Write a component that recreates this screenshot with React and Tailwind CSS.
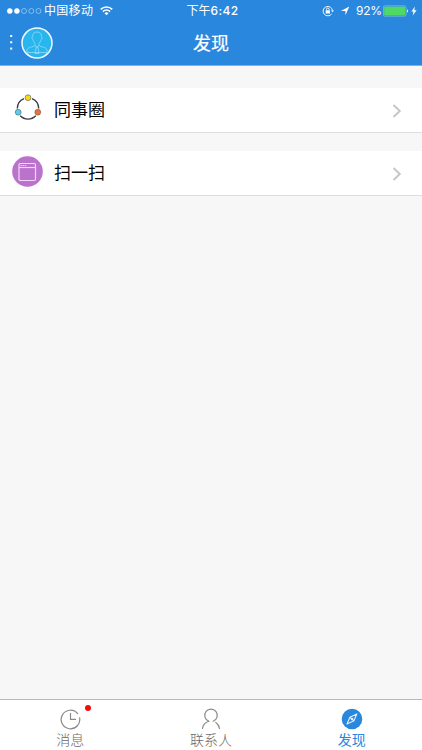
import React, { useState } from 'react';

const AvatarIcon = () => (
  <svg width="32" height="32" viewBox="0 0 32 32" fill="none">
    <circle cx="16" cy="16" r="15" fill="#29b6ee" stroke="#f2faff" strokeWidth="1.5" />
    <g stroke="#8edcfa" strokeWidth="0.8" strokeLinejoin="round">
      <path d="M11.6 9.6C11.3 6.6 13.2 5 16 5s4.800 1.600 4.500 4.600c.8.2.7 2.600-.4 2.900-.4 1.900-1.300 3.200-2.100 3.800v2.200c1.800 1.500 7.500 1.800 8 4.400v2.600H6v-2.600c.5-2.600 6.200-2.900 8-4.400v-2.200c-.8-.6-1.700-1.900-2.100-3.800-1.100-.3-1.200-2.700-.3-2.900z" />
      <path d="M14 18.500l2 1.500 2-1.500M15.200 20h1.600l1.200 6.500h-4l1.200-6.500z" />
    </g>
  </svg>
);

const CircleIcon = () => (
  <svg width="30" height="30" viewBox="0 0 30 30" fill="none">
    <g stroke="#3c3c40" strokeWidth="1.400">
      <path d="M19 4.700A10.800 10.800 0 0 1 25.700 14.600" />
      <path d="M11 4.700A10.800 10.800 0 0 0 4.300 14.600" />
      <path d="M7.200 21.800A10.800 10.800 0 0 0 22.800 21.800" />
    </g>
    <g stroke="#6a6a60" strokeWidth="0.700">
      <circle cx="15" cy="3.700" r="2.900" fill="#f5dc16" />
      <circle cx="5.200" cy="18.200" r="2.900" fill="#4fd0f5" />
      <circle cx="24.800" cy="18.200" r="2.900" fill="#f0702c" />
    </g>
  </svg>
);

const ScanIcon = () => (
  <svg width="31" height="31" viewBox="0 0 31 31" fill="none">
    <circle cx="15.500" cy="15.500" r="15.300" fill="#ba72cc" />
    <g stroke="#efd9f5" strokeWidth="1.200">
      <rect x="7" y="7.500" width="16.500" height="17" rx="1.200" />
      <path d="M7 11.500h16.500" />
      <path d="M8.500 9.500h6" strokeWidth="0.900" strokeDasharray="1.400 0.700" />
    </g>
  </svg>
);

const ClockIcon = () => (
  <svg width="22" height="22" viewBox="0 0 22 22" fill="none" stroke="#8a8a8a" strokeWidth="1.200">
    <path d="M18.800 5.800A9.300 9.300 0 1 0 20.500 9.300" />
    <path d="M11.500 5v6.300h5.500" />
  </svg>
);

const ContactIcon = () => (
  <svg width="22" height="22" viewBox="0 0 22 22" fill="none" stroke="#8a8a8a" strokeWidth="1.200" strokeLinecap="round">
    <path d="M8.800 13.300A6.300 6.300 0 1 1 13.200 13.300" />
    <path d="M8.800 13.300C5 14.500 3 17 2.500 20.500" />
    <path d="M15.800 14.500c2 1.300 3.200 3.300 3.700 6" />
  </svg>
);

const CompassIcon = () => (
  <svg width="22" height="22" viewBox="0 0 22 22" fill="none">
    <circle cx="11" cy="11" r="10.300" fill="#2987dd" />
    <g stroke="#e4f1fc" strokeWidth="1.100" strokeLinejoin="round">
      <path d="M15.900 5.900L12.900 12.800L6 16L8.900 9.200Z" />
      <path d="M8.900 9.200L12.900 12.800" />
      <circle cx="11" cy="11" r="0.800" />
    </g>
  </svg>
);

const Chevron = () => (
  <svg width="10" height="14" viewBox="0 0 10 14" fill="none" stroke="#c5c5ca" strokeWidth="1.900">
    <path d="M1.500 1l6.300 6-6.300 6" />
  </svg>
);

const ROWS = [
  { label: '同事圈', Icon: CircleIcon },
  { label: '扫一扫', Icon: ScanIcon },
];

const TABS = [
  { label: '消息', Icon: ClockIcon, unread: true },
  { label: '联系人', Icon: ContactIcon },
  { label: '发现', Icon: CompassIcon },
];

const StatusBar = () => (
  <div className="grid grid-cols-[1fr_auto_1fr] h-[22px] items-center text-[12px] leading-[22px]">
    <div className="flex items-center pl-[7px]">
      <svg width="35" height="6" viewBox="0 0 35 6" fill="none" stroke="#fff" strokeWidth="0.600">
        <circle cx="2.800" cy="3" r="2.500" fill="#fff" />
        <circle cx="9.900" cy="3" r="2.500" fill="#fff" />
        <circle cx="17" cy="3" r="2.500" opacity="0.700" />
        <circle cx="24.300" cy="3" r="2.500" opacity="0.700" />
        <circle cx="31.500" cy="3" r="2.500" opacity="0.700" />
      </svg>
      <span className="ml-[2px] tracking-[0.3px]">中国移动</span>
      <svg className="ml-[7px]" width="13" height="10" viewBox="0 0 13 10" fill="none" stroke="#fff" strokeWidth="1.500">
        <path d="M0.700 3.400a8.200 8.200 0 0 1 11.600 0" />
        <path d="M2.900 5.600a5.100 5.100 0 0 1 7.200 0" />
        <path d="M6.500 9.300L4.500 7.300a2.800 2.800 0 0 1 4 0z" fill="#fff" stroke="none" />
      </svg>
    </div>
    <span className="pl-[3px]">下午<span className="font-medium tracking-[0.4px]">6:42</span></span>
    <div className="flex items-center justify-end pr-[5px]">
      <svg width="12" height="12" viewBox="0 0 12 12" fill="none" stroke="#fff" strokeWidth="0.900">
        <path d="M9.700 8.800A4.700 4.700 0 1 1 10.500 5.600" />
        <path d="M9 5.400h3l-1.500 1.900z" fill="#fff" stroke="none" />
        <rect x="3.700" y="5.300" width="4.200" height="3.200" fill="#fff" stroke="none" />
        <path d="M4.500 5.400V4.300a1.300 1.300 0 0 1 2.600 0v1.100" />
      </svg>
      <svg className="ml-[6px]" width="10" height="10" viewBox="0 0 10 10" fill="#fff">
        <path d="M9.300 0.600L5.400 9.300V4.900H0.800z" />
      </svg>
      <span className="ml-[6px] w-[27px] text-[12px] leading-[22px] tracking-[-0.3px]">92%</span>
      <svg width="26" height="12" viewBox="0 0 26 12" fill="none">
        <rect x="0.400" y="0.900" width="22.600" height="10.200" rx="1.400" stroke="#8fd0c8" strokeWidth="0.700" />
        <rect x="1.200" y="1.700" width="21" height="8.600" rx="0.800" fill="#4fd964" />
        <path d="M24 4.300c1.300.4 1.300 3 0 3.400z" fill="#fff" />
      </svg>
      <svg className="ml-[2px]" width="6" height="10" viewBox="0 0 6 10" fill="#fff">
        <path d="M3.900 0.500L0.400 5.500h2.100L1.700 9.500l3.900-5.200H3.300z" />
      </svg>
    </div>
  </div>
);

const App = () => {
  const [active, setActive] = useState('发现');

  return (
    <div className="flex flex-col h-[750px] w-[422px] overflow-hidden bg-[#f7f7f7] font-[Inter,'Noto_Sans_CJK_SC',sans-serif]">
      {/* Header */}
      <header className="h-[66px] shrink-0 bg-[#2987dd] border-b border-[#78b3e9] text-white">
        <StatusBar />
        <div className="grid grid-cols-[1fr_auto_1fr] items-center h-[41px]">
          <div className="flex items-center pl-[10px]">
            <svg width="3" height="16" viewBox="0 0 3 16" fill="#fff">
              <rect x="0.200" y="0" width="2" height="2" />
              <rect x="0.200" y="6.300" width="2" height="2" />
              <rect x="0.200" y="12.600" width="2" height="2" />
            </svg>
            <button className="ml-[7.500px]"><AvatarIcon /></button>
          </div>
          <h1 className="pt-[3px] text-[18px] leading-[26px] [-webkit-text-stroke:0.2px]">发现</h1>
        </div>
      </header>

      {/* Entries */}
      <main className="flex-1 flex flex-col gap-[18px] pt-[22px]">
        {ROWS.map(({ label, Icon }) => (
          <button key={label} className="flex items-center h-[45px] w-full bg-white border-b border-[#dedede] pr-[20px] text-left">
            <span className="flex justify-center w-[54px] pl-px pb-[3px]"><Icon /></span>
            <span className="flex-1 text-[17px] leading-6 text-black">{label}</span>
            <span className="pt-[2px]"><Chevron /></span>
          </button>
        ))}
      </main>

      {/* Tab bar */}
      <nav className="grid grid-cols-3 h-[51px] shrink-0 bg-white border-t border-[#b9b9b9]">
        {TABS.map(({ label, Icon, unread }) => (
          <button key={label} onClick={() => setActive(label)} className="flex flex-col items-center pt-2">
            <span className="relative">
              <Icon />
              {unread && <span className="absolute -top-[3px] left-[26px] size-[6px] rounded-full bg-[#f20d0d]" />}
            </span>
            <span className={`text-[14px] leading-5 ${active === label ? 'text-[#2987dd]' : 'font-light text-[#686868]'}`}>{label}</span>
          </button>
        ))}
      </nav>
    </div>
  );
};

export default App;
